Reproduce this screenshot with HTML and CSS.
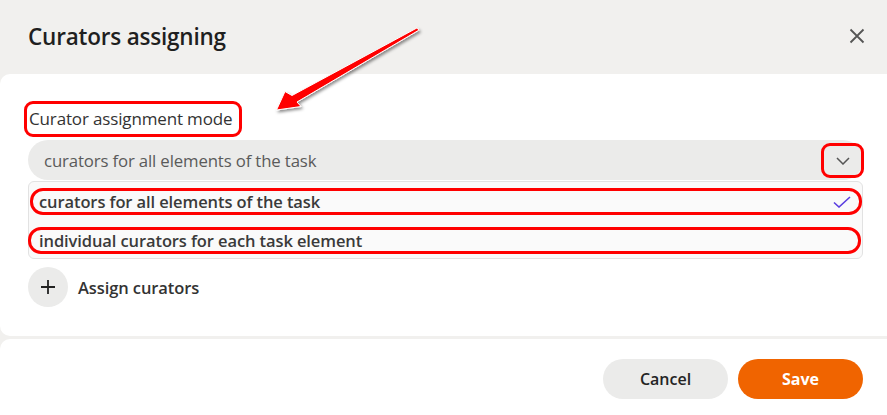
FILE: index.html
```html
<!DOCTYPE html>
<html lang="en">
<head>
<meta charset="utf-8">
<title>Curators assigning</title>
<link rel="stylesheet" href="styles.css">
</head>
<body>
<div class="dialog">
  <header class="dlg-header">
    <h1 class="dlg-title">Curators assigning</h1>
    <button class="close-btn" aria-label="Close">
      <svg width="16" height="16" viewBox="0 0 16 16"><path d="M1.5 1.5 L14.5 14.5 M14.5 1.5 L1.5 14.5" stroke="#555" stroke-width="1.8" fill="none"/></svg>
    </button>
  </header>
  <main class="dlg-body">
    <div class="field-label"><span class="mark mark-label">Curator assignment mode</span></div>
    <div class="select">
      <span class="select-value">curators for all elements of the task</span>
      <span class="select-chevron mark">
        <svg width="14" height="8" viewBox="0 0 14 8"><path d="M1 1 L7 7 L13 1" stroke="#555" stroke-width="1.5" fill="none"/></svg>
      </span>
    </div>
    <ul class="options">
      <li class="option option-selected mark">
        <span>curators for all elements of the task</span>
        <svg width="18" height="12" viewBox="0 0 18 12"><path d="M1 6.5 L6 11 L17 1" stroke="#5a3ee0" stroke-width="1.6" fill="none"/></svg>
      </li>
      <li class="option mark"><span>individual curators for each task element</span></li>
    </ul>
    <div class="assign-row">
      <span class="plus-circle">
        <svg width="16" height="16" viewBox="0 0 16 16"><path d="M8 1 V15 M1 8 H15" stroke="#222" stroke-width="1.8" fill="none"/></svg>
      </span>
      <span class="assign-text">Assign curators</span>
    </div>
  </main>
  <footer class="dlg-footer">
    <button class="btn btn-cancel">Cancel</button>
    <button class="btn btn-save">Save</button>
  </footer>
</div>
<svg class="arrow" width="887" height="415" viewBox="0 0 887 415">
  <defs>
    <filter id="sh" x="-20%" y="-20%" width="140%" height="140%">
      <feDropShadow dx="1.5" dy="2" stdDeviation="1.6" flood-color="#000" flood-opacity="0.45"/>
    </filter>
  </defs>
  <polygon filter="url(#sh)" fill="#ff0000" stroke="#ffffff" stroke-width="1" stroke-linejoin="round"
    points="418.8,30.2 297,102 301,106.5 276.5,110 285,91.5 292,95.5 417.2,27.8"/>
</svg>
</body>
</html>
```
FILE: styles.css
```css
* { box-sizing: border-box; }
html, body {
  margin: 0;
  padding: 0;
  width: 887px;
  height: 415px;
  overflow: hidden;
  background: #f1f0ee;
  font-family: "Open Sans", "Noto Sans", sans-serif;
}
.dialog {
  display: flex;
  flex-direction: column;
  height: 415px;
}
.dlg-header {
  height: 74px;
  display: flex;
  align-items: center;
  justify-content: space-between;
  padding: 0 22px 0 28px;
}
.dlg-title {
  margin: 0;
  margin-top: -2px;
  font-size: 22.5px;
  font-weight: 600;
  color: #1f1f1f;
  letter-spacing: -0.2px;
}
.close-btn {
  border: 0;
  background: transparent;
  padding: 0;
  width: 16px;
  height: 16px;
  display: flex;
  margin-top: -2px;
}
.dlg-body {
  background: #ffffff;
  border-radius: 10px 0 0 10px;
  height: 262px;
  padding: 27px 24px 0 28px;
  display: flex;
  flex-direction: column;
}
.mark {
  border: 3px solid #ff0000;
}
.field-label {
  margin-left: -4px;
  margin-bottom: 3px;
}
.mark-label {
  display: inline-block;
  border-radius: 9px;
  padding: 3px 4px 4px 2px;
  font-size: 17px;
  color: #333;
  letter-spacing: -0.15px;
  width: 218px;
  height: 36px;
  white-space: nowrap;
}
.select {
  height: 40px;
  background: #ebebea;
  border-radius: 20px;
  display: flex;
  align-items: center;
  justify-content: space-between;
  padding: 0 0 0 16px;
}
.select-value {
  font-size: 16.8px;
  color: #5a5a5a;
  letter-spacing: -0.15px;
}
.select-chevron {
  width: 43px;
  height: 35px;
  border-radius: 9px;
  display: flex;
  align-items: center;
  justify-content: center;
  margin-right: -1px;
  margin-top: 1px;
}
.options {
  list-style: none;
  margin: 1px 0 0 0;
  padding: 6px 0 4px 0;
  background: #fafafa;
  border: 1px solid #e2e2e2;
  border-radius: 6px;
  height: 78px;
  display: flex;
  flex-direction: column;
  gap: 12px;
}
.option {
  height: 27px;
  border-radius: 13px;
  display: flex;
  align-items: center;
  justify-content: space-between;
  padding: 0 8px 0 6px;
  font-size: 16.5px;
  font-weight: 600;
  color: #3a3a3a;
  letter-spacing: -0.1px;
}
.option-selected {
  margin-left: 1px;
}
.option:not(.option-selected) {
  margin-left: -1px;
  margin-right: 1px;
  padding-left: 8px;
}
.assign-row {
  display: flex;
  align-items: center;
  gap: 10px;
  margin-top: 8px;
}
.plus-circle {
  width: 40px;
  height: 40px;
  border-radius: 50%;
  background: #ebebea;
  display: flex;
  align-items: center;
  justify-content: center;
}
.assign-text {
  font-size: 16.5px;
  font-weight: 600;
  color: #333;
  letter-spacing: -0.1px;
}
.dlg-footer {
  margin-top: 3px;
  flex: 1;
  background: #ffffff;
  border-radius: 10px 0 0 0;
  display: flex;
  justify-content: flex-end;
  align-items: flex-start;
  gap: 10px;
  padding: 20px 24px 0 0;
}
.btn {
  width: 125px;
  height: 40px;
  border: 0;
  border-radius: 20px;
  font-family: inherit;
  font-size: 16px;
  font-weight: 600;
}
.btn-cancel {
  background: #ebebea;
  color: #242424;
}
.btn-save {
  background: #f06400;
  color: #ffffff;
  font-weight: 700;
}
.arrow {
  position: absolute;
  left: 0;
  top: 0;
  pointer-events: none;
}
```
